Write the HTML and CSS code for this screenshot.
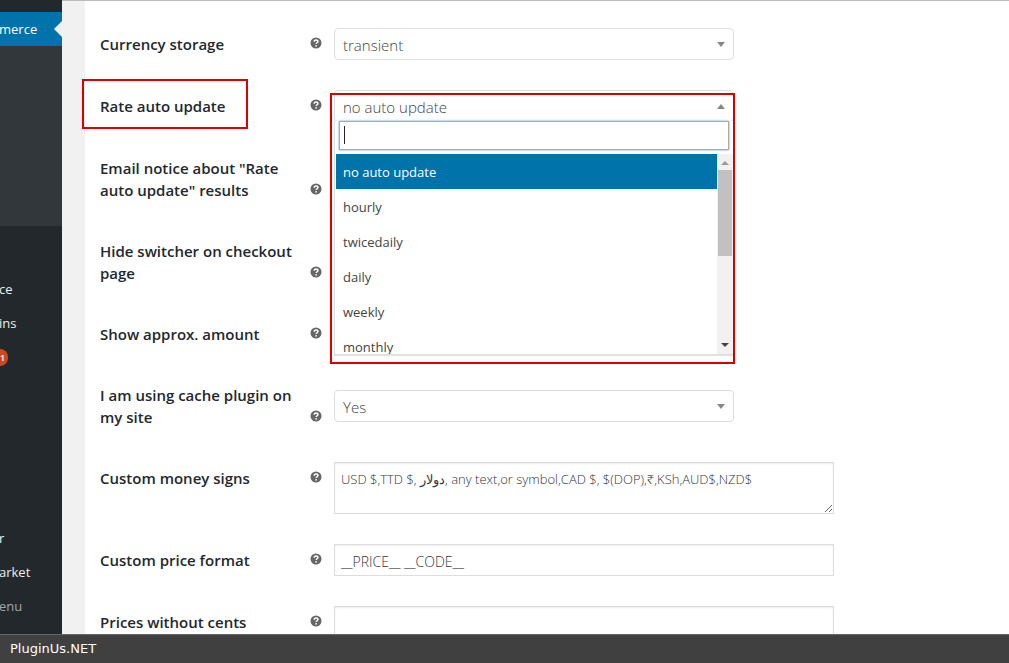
FILE: index.html
```html
<!DOCTYPE html>
<html lang="en">
<head>
    <meta charset="UTF-8">
    <title>Currency settings</title>
    <link rel="stylesheet" href="styles.css">
</head>
<body>
    <svg class="sprite" aria-hidden="true">
        <symbol id="help" viewBox="0 0 12 12">
            <circle cx="6" cy="6" r="5.5" fill="#666"/>
            <path d="M4.2 4.7C4.2 3.5 5 2.9 6 2.9s1.9.6 1.9 1.6c0 1.3-1.7 1.2-1.7 2.5" fill="none" stroke="#fff" stroke-width="1.5"/>
            <circle cx="6.1" cy="8.8" r=".9" fill="#fff"/>
        </symbol>
    </svg>

    <div class="wrap">
        <nav class="sidebar">
            <a href="#" class="menu-item current">merce</a>
            <div class="submenu"></div>
            <div class="menu-group">
                <a href="#" class="menu-item">ce</a>
                <a href="#" class="menu-item">ins</a>
                <a href="#" class="menu-item"><span class="badge">1</span></a>
            </div>
            <div class="menu-group last">
                <a href="#" class="menu-item">r</a>
                <a href="#" class="menu-item">arket</a>
                <button type="button" class="menu-item collapse">enu</button>
            </div>
        </nav>

        <main class="content">
            <form class="settings">
                <div class="row">
                    <div class="head">
                        <label for="storage">Currency storage</label>
                        <svg class="help"><use href="#help"/></svg>
                    </div>
                    <div class="field select">
                        <select id="storage"><option>transient</option></select>
                    </div>
                </div>

                <div class="row">
                    <div class="head marked">
                        <label for="rate">Rate auto update</label>
                        <svg class="help"><use href="#help"/></svg>
                    </div>
                    <div class="field select open">
                        <button type="button" id="rate" class="select-button" aria-expanded="true">no auto update</button>
                        <div class="dropdown">
                            <input type="text" class="search" aria-label="Search">
                            <span class="caret"></span>
                            <div class="results">
                                <ul class="options">
                                    <li class="active">no auto update</li>
                                    <li>hourly</li>
                                    <li>twicedaily</li>
                                    <li>daily</li>
                                    <li>weekly</li>
                                    <li>monthly</li>
                                </ul>
                                <div class="scrollbar">
                                    <span class="arrow up"></span>
                                    <span class="thumb"></span>
                                    <span class="arrow down"></span>
                                </div>
                            </div>
                        </div>
                    </div>
                </div>

                <div class="row">
                    <div class="head">
                        <span class="label">Email notice about "Rate auto update" results</span>
                        <svg class="help"><use href="#help"/></svg>
                    </div>
                </div>

                <div class="row">
                    <div class="head">
                        <span class="label">Hide switcher on checkout page</span>
                        <svg class="help"><use href="#help"/></svg>
                    </div>
                </div>

                <div class="row">
                    <div class="head">
                        <span class="label">Show approx. amount</span>
                        <svg class="help"><use href="#help"/></svg>
                    </div>
                </div>

                <div class="row">
                    <div class="head">
                        <label for="cache">I am using cache plugin on my site</label>
                        <svg class="help"><use href="#help"/></svg>
                    </div>
                    <div class="field select">
                        <select id="cache"><option>Yes</option></select>
                    </div>
                </div>

                <div class="row">
                    <div class="head">
                        <label for="signs">Custom money signs</label>
                        <svg class="help"><use href="#help"/></svg>
                    </div>
                    <div class="field wide">
                        <textarea id="signs">USD $,TTD $, دولار, any text,or symbol,CAD $, $(DOP),₹,KSh,AUD$,NZD$</textarea>
                    </div>
                </div>

                <div class="row">
                    <div class="head">
                        <label for="format">Custom price format</label>
                        <svg class="help"><use href="#help"/></svg>
                    </div>
                    <div class="field wide">
                        <input type="text" id="format" value="__PRICE__ __CODE__">
                    </div>
                </div>

                <div class="row">
                    <div class="head">
                        <label for="cents">Prices without cents</label>
                        <svg class="help"><use href="#help"/></svg>
                    </div>
                    <div class="field wide">
                        <input type="text" id="cents">
                    </div>
                </div>
            </form>
        </main>
    </div>

    <footer class="footer">PluginUs.NET</footer>
</body>
</html>
```
FILE: styles.css
```css
*, *::before {
    box-sizing: border-box;
}

body {
    display: flex;
    flex-direction: column;
    height: 100vh;
    margin: 0;
    overflow: hidden;
    background-color: #fff;
    font-family: "Open Sans", "Noto Sans", sans-serif;
    font-size: 13px;
}

.sprite {
    display: none;
}

.wrap {
    flex: 1;
    display: flex;
    min-height: 0;
    overflow: hidden;
}

/* Sidebar */

.sidebar {
    width: 62px;
    flex-shrink: 0;
    padding-top: 12px;
    background-color: #23282d;
    overflow: hidden;
}

.menu-item {
    position: relative;
    display: flex;
    align-items: center;
    width: 100%;
    height: 34px;
    padding: 0;
    border: none;
    background: none;
    color: #eee;
    font-family: inherit;
    font-size: 13px;
    text-decoration: none;
    text-indent: -1px;
}

.menu-item.current {
    background-color: #0073aa;
    color: #fff;
}

.menu-item.current::after {
    content: "";
    position: absolute;
    top: 9px;
    right: 0;
    border: 8px solid transparent;
    border-right-color: #f1f1f1;
    border-left: none;
}

.menu-item.collapse {
    color: #a0a5aa;
}

.submenu {
    height: 180px;
    background-color: #32373c;
}

.menu-group {
    margin-top: 46px;
}

.menu-group.last {
    margin-top: 147px;
}

.badge {
    width: 8px;
    height: 17px;
    border-radius: 0 9px 9px 0;
    background-color: #ca4a1f;
    color: #fff;
    font-size: 9px;
    font-weight: 600;
    line-height: 17px;
    text-indent: 0;
}

/* Settings form */

.content {
    flex: 1;
    padding-left: 23px;
    border-top: 1px solid #bbb;
    background: linear-gradient(to right, #f1f1f1 23px, #fff 23px);
}

.settings {
    padding: 11px 15px 0;
}

.row {
    display: flex;
    align-items: center;
}

.head {
    position: relative;
    display: flex;
    align-items: flex-end;
    align-self: flex-start;
    justify-content: space-between;
    width: 222px;
    padding: 21px 0 18px;
    color: #23282d;
    font-size: 15px;
    font-weight: 600;
    line-height: 22px;
}

.head label, .head .label {
    width: 200px;
}

.head.marked::before {
    content: "";
    position: absolute;
    top: 5px;
    left: -18px;
    width: 166px;
    height: 50px;
    border: 2px solid #d80000;
}

.help {
    width: 12px;
    height: 12px;
    margin-bottom: 6px;
}

.field {
    position: relative;
    width: 400px;
    margin-left: 12px;
    padding: 16px 0 14px;
}

.field.wide {
    width: 500px;
}

.field select, .select-button {
    appearance: none;
    display: block;
    width: 100%;
    height: 32px;
    padding: 2px 8px 0;
    border: 1px solid #ddd;
    border-radius: 4px;
    background-color: #fff;
    color: #444;
    font-family: inherit;
    font-size: 15px;
    font-weight: 300;
    text-align: left;
}

.field.select::after {
    content: "";
    position: absolute;
    top: 30px;
    right: 9px;
    border: 4px solid transparent;
    border-top: 5px solid #888;
    border-bottom: none;
}

.field.select.open::after {
    z-index: 2;
    border-top: none;
    border-bottom: 5px solid #888;
}

/* frame round the open list */
.field.select.open::before {
    content: "";
    position: absolute;
    z-index: 3;
    top: 19px;
    left: -4px;
    width: 405px;
    height: 271px;
    border: 2px solid #d80000;
    pointer-events: none;
}

.field input, .field textarea {
    display: block;
    width: 100%;
    height: 32px;
    padding: 2px 6px 0;
    border: 1px solid #ddd;
    background-color: #fff;
    box-shadow: inset 0 1px 2px rgba(0, 0, 0, 0.07);
    color: #32373c;
    font-family: inherit;
    font-size: 14px;
    font-weight: 300;
}

.field textarea {
    height: 52px;
    padding-top: 7px;
    font-size: 13px;
    resize: both;
}

/* Open dropdown */

.dropdown {
    position: absolute;
    z-index: 1;
    top: 47px;
    left: 0;
    width: 400px;
    padding-left: 1px;
    border: 1px solid #ddd;
    border-top: none;
    background-color: #fff;
    box-shadow: 0 1px 1px rgba(0, 0, 0, 0.1);
}

.dropdown .search {
    width: 390px;
    height: 29px;
    margin: 0 3px 4px;
    border: 1px solid #aaa;
    box-shadow: 0 0 2px #5b9dd9;
}

.dropdown .caret {
    position: absolute;
    top: 5px;
    left: 9px;
    width: 1px;
    height: 18px;
    background-color: #222;
}

.results {
    display: flex;
    height: 200px;
    overflow: hidden;
}

.options {
    flex: 1;
    margin: 0;
    padding: 0;
    list-style: none;
}

.options li {
    height: 35px;
    padding: 0 7px;
    color: #444;
    line-height: 37px;
}

.options .active {
    background-color: #0073aa;
    color: #fff;
}

.scrollbar {
    display: flex;
    flex-direction: column;
    align-items: center;
    width: 16px;
    padding: 7px 0;
    background-color: #f1f1f1;
}

.arrow {
    border: 4px solid transparent;
}

.arrow.up {
    border-top: none;
    border-bottom-color: #999;
}

.arrow.down {
    margin-top: auto;
    border-top-color: #444;
    border-bottom: none;
}

.thumb {
    width: 14px;
    height: 86px;
    margin-top: 5px;
    background-color: #c1c1c1;
}

.footer {
    height: 29px;
    flex-shrink: 0;
    padding-left: 10px;
    border-top: 1px solid #666;
    background-color: #404040;
    color: #fff;
    font-family: "DejaVu Sans", sans-serif;
    font-size: 13px;
    line-height: 28px;
}
```
